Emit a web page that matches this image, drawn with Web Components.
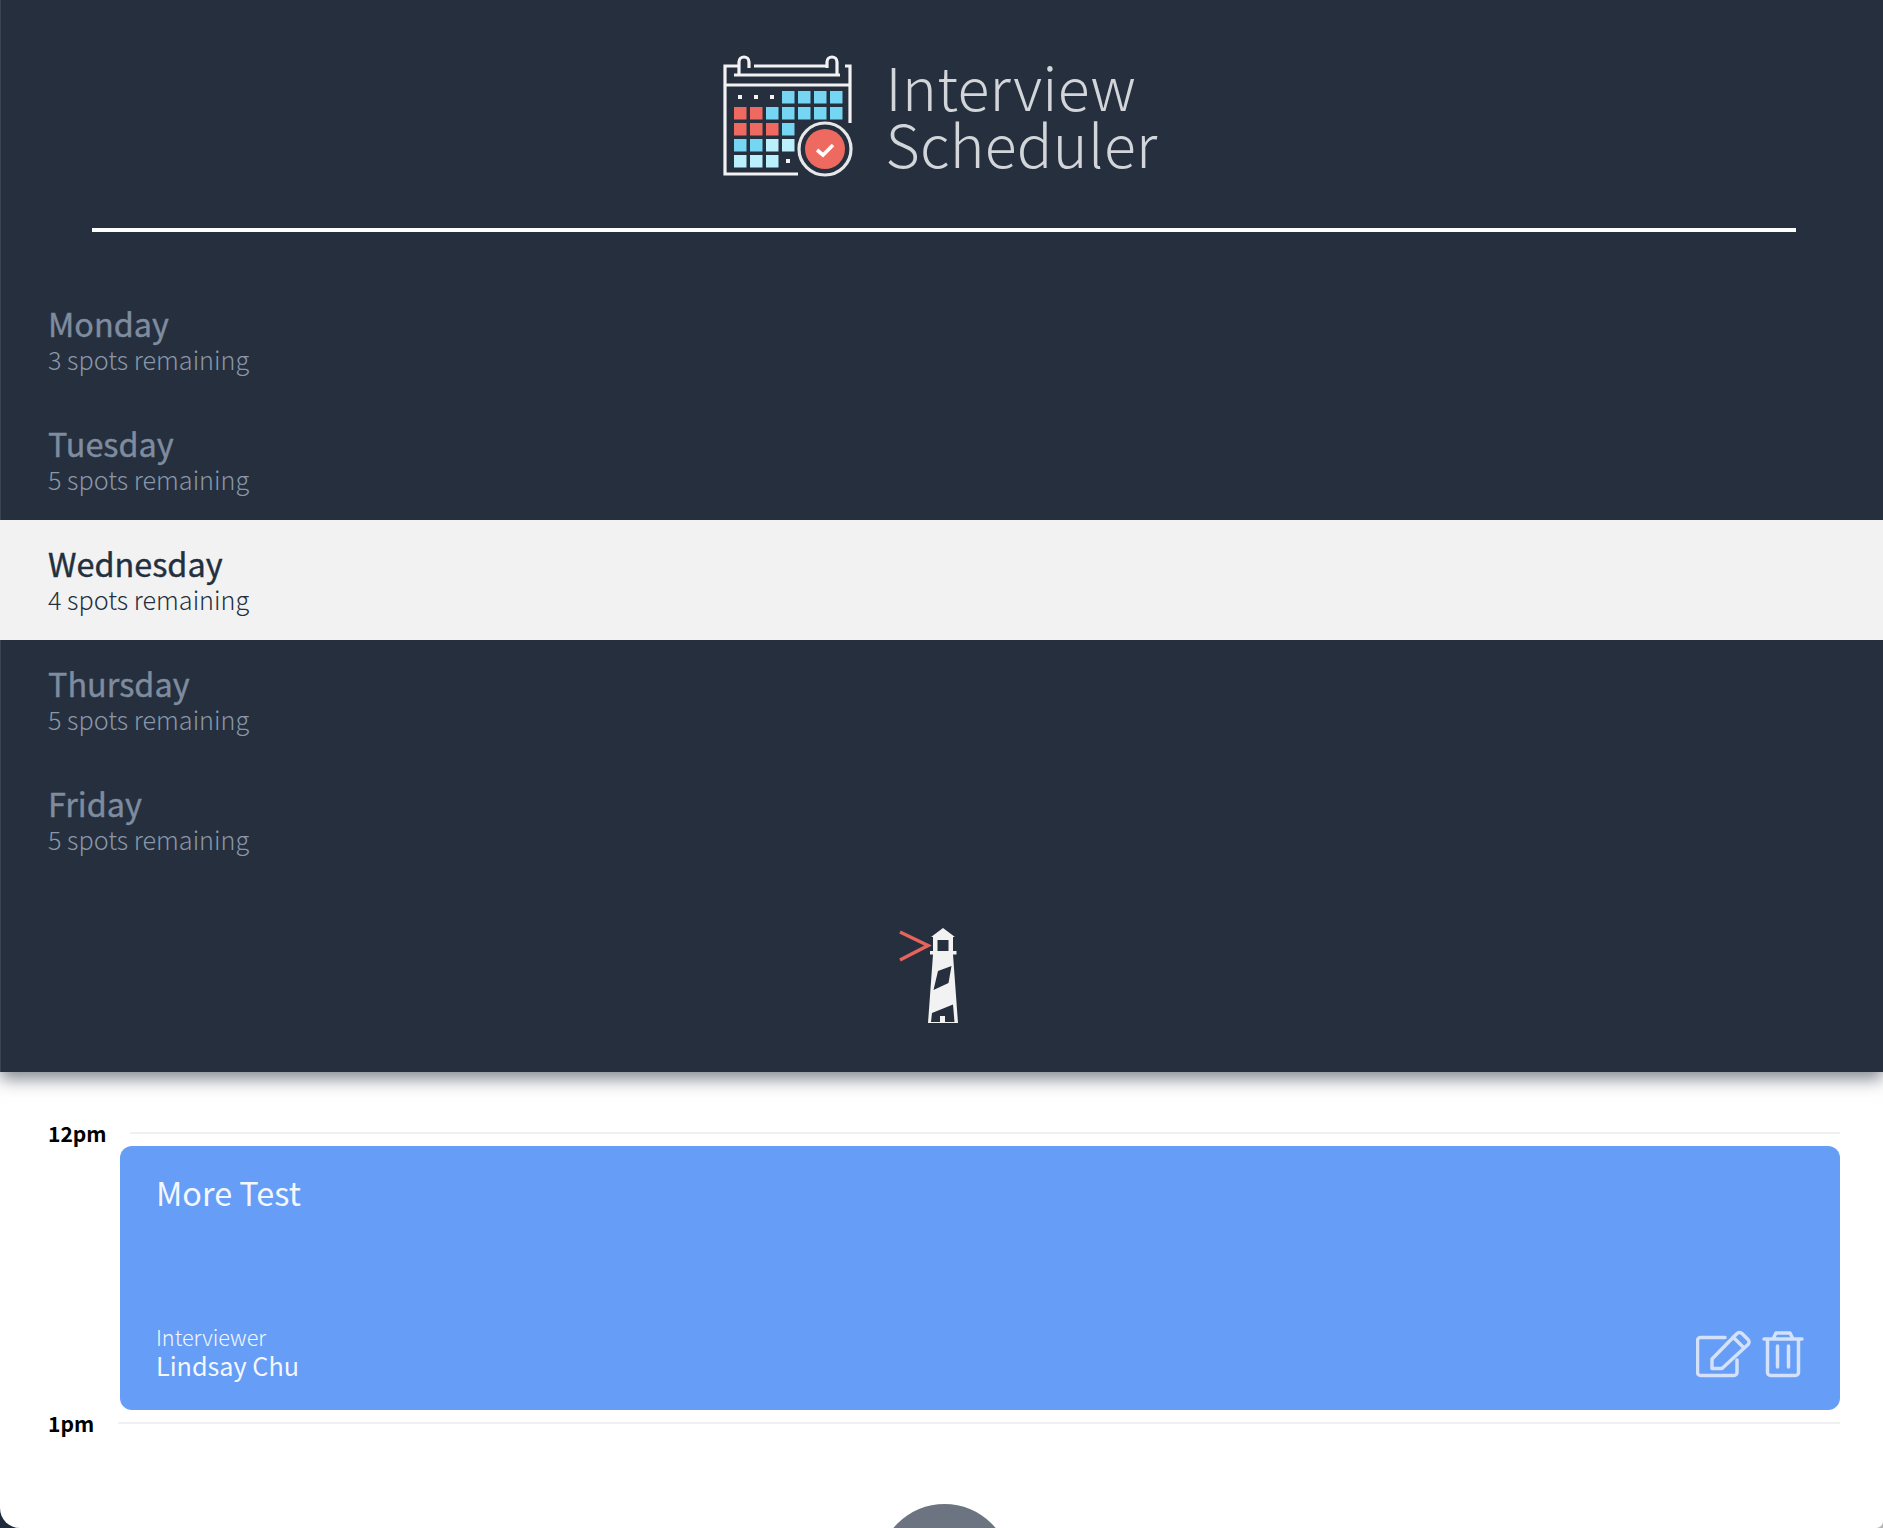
<!DOCTYPE html>
<html lang="en"><head><meta charset="utf-8"><title>Interview Scheduler</title>
<style>
html,body{margin:0;height:1528px;overflow:hidden;background:linear-gradient(90deg,#1f2b3c 50%,#b5b5b5 50%)}
body{font-family:"Noto Sans CJK SC","Source Sans Pro","Noto Sans",sans-serif}
</style></head><body>
<template id="t-logo"><style>
:host{display:flex;justify-content:center;align-items:flex-start;gap:21px;padding:53px 4px 0 0;height:228px;box-sizing:border-box}
svg{display:block;flex:none;margin-top:-7px;margin-left:-8px}
.t{font-weight:300;font-size:59px;line-height:57px;color:#d2d5d9;letter-spacing:.3px;padding-top:4px}
</style>
<svg width="150" height="140" viewBox="0 0 150 140" fill="none">
<g stroke="#f2f2f2" stroke-width="3.200">
<path d="M135 77V20H130M23 20H10V128H83M10 39H135M39 20H113M19 29H125"/>
<path d="M24 28V16a5 5 0 0 1 10 0V22M112 22V16a5 5 0 0 1 10 0V28"/>
</g>
<g fill="#74d6f2">
<path d="M67 45h12.500v12.500H67zM83 45h12.500v12.500H83zM99 45h12.500v12.500H99zM115 45h12.500v12.500H115z"/>
<path d="M51 61h12.500v12.500H51zM67 61h12.500v12.500H67zM83 61h12.500v12.500H83zM99 61h12.500v12.500H99zM115 61h12.500v12.500H115z"/>
<path d="M67 77h12.500v12.500H67zM19 93h12.500v12.500H19zM35 93h12.500v12.500H35z"/>
</g>
<g fill="#ee6a60">
<path d="M19 61h12.500v12.500H19zM35 61h12.500v12.500H35zM19 77h12.500v12.500H19zM35 77h12.500v12.500H35zM51 77h12.500v12.500H51z"/>
</g>
<g fill="#b9f0fb">
<path d="M51 93h12.500v12.500H51zM67 93h12.500v12.500H67zM19 109h12.500v12.500H19zM35 109h12.500v12.500H35zM51 109h12.500v12.500H51z"/>
</g>
<g fill="#f2f2f2"><rect x="23" y="49" width="4" height="4"/><rect x="39" y="49" width="4" height="4"/><rect x="55" y="49" width="4" height="4"/><rect x="71" y="113" width="4" height="4"/></g>
<circle cx="110" cy="103" r="26" stroke="#e6e7e9" stroke-width="3.200"/>
<circle cx="110" cy="103" r="20" fill="#ee6a60"/>
<path d="M102 104l6 5 10-10" stroke="#fff" stroke-width="3.600"/>
</svg>
<div class="t">Interview<br>Scheduler</div></template>

<template id="t-day"><style>
:host{display:block;height:120px;box-sizing:border-box;padding:22px 48px 0;color:#7e8c9f}
:host([selected]){background:#f2f2f2;color:#222f3e}
.n{font-size:32.400px;line-height:41px;font-weight:400;-webkit-text-stroke:.4px currentColor}
.s{font-size:25.200px;line-height:33px;font-weight:300;color:#8a97a8}
:host([selected]) .s{color:#222f3e}
</style><div class="n"><slot name="name"></slot></div><div class="s"><slot name="spots"></slot></div></template>

<template id="t-mark"><style>
:host{display:flex;justify-content:center;height:191px}
svg{display:block;margin-top:30px;margin-left:-3px}
</style>
<svg width="120" height="130" viewBox="0 0 120 130">
<path d="M20 22L48 35.500 20 50" fill="none" stroke="#e5645c" stroke-width="3.500"/>
<path fill="#f2f2f2" fill-rule="evenodd" d="M63 18L75 27H73V41H76.500V44.500H73L78 113H48L53 44.500H50V41H53V27H51ZM57.500 30V41H68.500V30ZM58 61L71.500 56 68.500 73 53.500 80ZM52 103L73 94.500 74.500 112H65V106H60V112H51Z"/>
</svg></template>

<template id="t-top"><style>
:host{display:block;background:#262f3e;height:1072px;border-left:1px solid #3a4453;box-sizing:border-box;box-shadow:0 7px 16px rgba(30,40,55,.55);position:relative;z-index:1}
.rule{height:4px;background:#fff;margin:0 87px 0 91px}
.d{padding-top:48px;margin-left:-1px}
</style><slot name="head"></slot><div class="rule"></div><div class="d"><slot></slot></div></template>

<template id="t-slot"><style>
:host{display:grid;grid-template-columns:var(--gutter,82px) 1fr;padding:0 43px 0 48px;height:14px;align-items:start}
.l{font-size:21px;line-height:24px;font-weight:700;color:#000;margin-top:-11px}
.r{height:2px;background:#f0f0f0}
</style><div class="l"><slot></slot></div><div class="r"></div></template>

<template id="t-card"><style>
:host{display:flex;flex-direction:column;justify-content:space-between;margin:0 43px 0 120px;height:264px;box-sizing:border-box;background:#669df6;border-radius:12px;color:#f4f7fd;padding:27px 36px 30px}
.h{font-size:32.400px;line-height:38px;font-weight:400}
.f{display:flex;justify-content:space-between;align-items:flex-end}
.i{font-size:21.600px;line-height:27px;font-weight:300}
.v{font-size:25.200px;line-height:30px;font-weight:400}
.a{display:flex;gap:10px;align-items:flex-end}
svg{display:block}
</style><div class="h"><slot name="title"></slot></div>
<div class="f"><div><div class="i"><slot name="label"></slot></div><div class="v"><slot name="who"></slot></div></div>
<div class="a">
<svg width="56" height="50" viewBox="0 0 56 50" fill="none" stroke="#d3e1fa" stroke-width="3.500" stroke-linejoin="round" stroke-linecap="round"><path d="M29 7.500H4.500a3 3 0 0 0-3 3v32a3 3 0 0 0 3 3H38a3 3 0 0 0 3-3V30"/><path d="M16 38.500V29L41 3.500a3.500 3.500 0 0 1 5 0l6 6a3.500 3.500 0 0 1 0 5L26 38.500ZM37 7l11 11"/></svg>
<svg width="42" height="50" viewBox="0 0 42 50" fill="none" stroke="#d3e1fa" stroke-width="3.500" stroke-linejoin="round" stroke-linecap="round"><path d="M2 9H40M5.500 10V42.500a3 3 0 0 0 3 3H33.500a3 3 0 0 0 3-3V10M11 9l3-6H28l3 6M15.500 16V37M26.500 16V37"/></svg>
</div></div></template>

<template id="t-add"><style>
:host{display:block;width:133px;height:133px;border-radius:50%;background:#6b7480;margin:68px auto 0;position:relative;left:3px}
</style></template>

<template id="t-app"><style>
:host{display:block;height:1528px;background:#fff;border-radius:0 0 7px 20px;overflow:hidden}
.s{padding-top:60px}
</style><slot name="top"></slot><div class="s"><slot></slot></div></template>

<scheduler-app>
<top-panel slot="top">
<app-logo slot="head"></app-logo>
<day-item><span slot="name">Monday</span><span slot="spots">3 spots remaining</span></day-item>
<day-item><span slot="name">Tuesday</span><span slot="spots">5 spots remaining</span></day-item>
<day-item selected><span slot="name">Wednesday</span><span slot="spots">4 spots remaining</span></day-item>
<day-item><span slot="name">Thursday</span><span slot="spots">5 spots remaining</span></day-item>
<day-item><span slot="name">Friday</span><span slot="spots">5 spots remaining</span></day-item>
<lighthouse-mark></lighthouse-mark>
</top-panel>
<time-slot>12pm</time-slot>
<appointment-card><span slot="title">More Test</span><span slot="label">Interviewer</span><span slot="who">Lindsay Chu</span></appointment-card>
<time-slot style="--gutter:70px;margin-top:12px">1pm</time-slot>
<add-button></add-button>
</scheduler-app>
<script>
const reg=(tag,tpl)=>customElements.define(tag,class extends HTMLElement{constructor(){super();this.attachShadow({mode:'open'}).appendChild(document.getElementById(tpl).content.cloneNode(true));}});
reg('app-logo','t-logo');reg('day-item','t-day');reg('lighthouse-mark','t-mark');reg('top-panel','t-top');reg('time-slot','t-slot');reg('appointment-card','t-card');reg('add-button','t-add');reg('scheduler-app','t-app');
</script>
</body></html>
